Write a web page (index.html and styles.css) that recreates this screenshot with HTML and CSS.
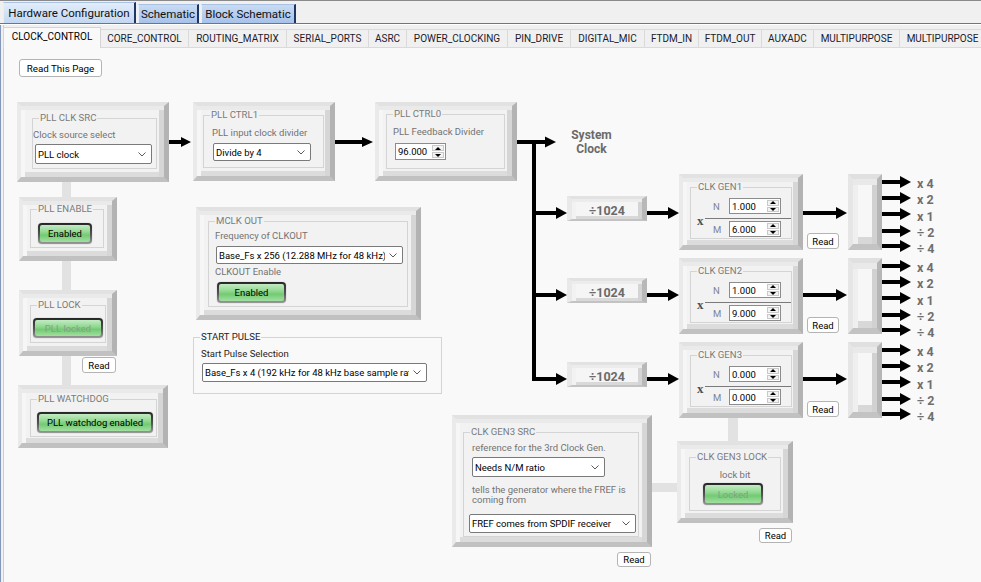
FILE: index.html
```html
<!DOCTYPE html>
<html lang="en">
<head>
<meta charset="utf-8">
<title>Hardware Configuration</title>
<link rel="stylesheet" href="styles.css">
</head>
<body>
<div class="app">
  <div class="main-tabs">
    <div class="mtab mt-hw active">Hardware Configuration</div>
    <div class="mtab mt-sch">Schematic</div>
    <div class="mtab mt-blk">Block Schematic</div>
  </div>
  <div class="main-rule"></div>
  <div class="work">
    <div class="sub-tabs">
      <div class="stab active">CLOCK_CONTROL</div>
      <div class="stab">CORE_CONTROL</div>
      <div class="stab">ROUTING_MATRIX</div>
      <div class="stab">SERIAL_PORTS</div>
      <div class="stab">ASRC</div>
      <div class="stab">POWER_CLOCKING</div>
      <div class="stab">PIN_DRIVE</div>
      <div class="stab">DIGITAL_MIC</div>
      <div class="stab">FTDM_IN</div>
      <div class="stab">FTDM_OUT</div>
      <div class="stab">AUXADC</div>
      <div class="stab">MULTIPURPOSE</div>
      <div class="stab">MULTIPURPOSE</div>
    </div>
    <div class="canvas">
      <svg class="wires" width="981" height="535" viewBox="0 0 981 535">
        <defs>
          <g id="oarr"><rect x="882" y="-2" width="19" height="4"/><polygon points="900,-6 911,0 900,6"/></g>
          <g id="row"><rect x="536" y="-2" width="21" height="4"/><polygon points="556,-6 567,0 556,6"/><rect x="647" y="-2" width="22" height="4"/><polygon points="668,-6 679,0 668,6"/><rect x="803" y="-2" width="34" height="4"/><polygon points="836,-6 847,0 836,6"/></g>
        </defs>
        <g fill="#e2e2e2">
          <rect x="62" y="135" width="9" height="203"/>
          <rect x="728" y="371" width="10" height="23"/>
          <rect x="652" y="436" width="26" height="9"/>
        </g>
        <g fill="#000">
          <rect x="169" y="93" width="13" height="4"/><polygon points="181,90 191,95 181,100"/>
          <rect x="335" y="93" width="28" height="4"/><polygon points="362,90 373,95 362,100"/>
          <rect x="517" y="93" width="29" height="4"/><polygon points="545,89.5 556,95 545,100.5"/>
          <rect x="532" y="93" width="4" height="241"/>
          <rect x="532" y="330" width="6" height="4"/>
          <use href="#row" y="166"/>
          <use href="#row" y="248"/>
          <use href="#row" y="332"/>
          <use href="#oarr" y="135"/><use href="#oarr" y="151"/><use href="#oarr" y="167"/><use href="#oarr" y="184"/><use href="#oarr" y="199"/>
          <use href="#oarr" y="219"/><use href="#oarr" y="235"/><use href="#oarr" y="251"/><use href="#oarr" y="268"/><use href="#oarr" y="283"/>
          <use href="#oarr" y="303"/><use href="#oarr" y="319"/><use href="#oarr" y="335"/><use href="#oarr" y="352"/><use href="#oarr" y="367"/>
        </g>
      </svg>

      <button class="btn read-page">Read This Page</button>

      <div class="bevel n-clksrc">
        <fieldset class="gb">
          <legend>PLL CLK SRC</legend>
          <div class="lbl">Clock source select</div>
          <div class="sel"><span class="sel-t">PLL clock</span><svg class="chev" viewBox="0 0 8 5"><path d="M0.5 0.5 L4 4 L7.5 0.5"/></svg></div>
        </fieldset>
      </div>

      <div class="bevel n-enable">
        <fieldset class="gb">
          <legend>PLL ENABLE</legend>
          <div class="led"><span>Enabled</span></div>
        </fieldset>
      </div>

      <div class="bevel n-lock">
        <fieldset class="gb">
          <legend>PLL LOCK</legend>
          <div class="led off"><span>PLL locked</span></div>
        </fieldset>
      </div>
      <button class="btn read-lock">Read</button>

      <div class="bevel n-wdog">
        <fieldset class="gb">
          <legend>PLL WATCHDOG</legend>
          <div class="led"><span>PLL watchdog enabled</span></div>
        </fieldset>
      </div>

      <div class="bevel n-ctrl1">
        <fieldset class="gb">
          <legend>PLL CTRL1</legend>
          <div class="lbl">PLL input clock divider</div>
          <div class="sel"><span class="sel-t">Divide by 4</span><svg class="chev" viewBox="0 0 8 5"><path d="M0.5 0.5 L4 4 L7.5 0.5"/></svg></div>
        </fieldset>
      </div>

      <div class="bevel n-ctrl0">
        <fieldset class="gb">
          <legend>PLL CTRL0</legend>
          <div class="lbl">PLL Feedback Divider</div>
          <div class="spin"><span class="spin-v">96.000</span><span class="spin-b"><i class="up"></i><i class="dn"></i></span></div>
        </fieldset>
      </div>

      <div class="sysclk"><div>System</div><div>Clock</div></div>

      <div class="div1024 d1">÷1024</div>
      <div class="div1024 d2">÷1024</div>
      <div class="div1024 d3">÷1024</div>

      <div class="bevel gen g1">
        <fieldset class="gb">
          <legend>CLK GEN1</legend>
          <div class="gen-body">
            <div class="mul">x</div>
            <div class="nm">
              <div class="nm-row"><span class="nm-l">N</span><div class="spin"><span class="spin-v">1.000</span><span class="spin-b"><i class="up"></i><i class="dn"></i></span></div></div>
              <div class="nm-sep"></div>
              <div class="nm-row"><span class="nm-l">M</span><div class="spin"><span class="spin-v">6.000</span><span class="spin-b"><i class="up"></i><i class="dn"></i></span></div></div>
            </div>
          </div>
        </fieldset>
      </div>
      <button class="btn read-gen r1">Read</button>

      <div class="bevel gen g2">
        <fieldset class="gb">
          <legend>CLK GEN2</legend>
          <div class="gen-body">
            <div class="mul">x</div>
            <div class="nm">
              <div class="nm-row"><span class="nm-l">N</span><div class="spin"><span class="spin-v">1.000</span><span class="spin-b"><i class="up"></i><i class="dn"></i></span></div></div>
              <div class="nm-sep"></div>
              <div class="nm-row"><span class="nm-l">M</span><div class="spin"><span class="spin-v">9.000</span><span class="spin-b"><i class="up"></i><i class="dn"></i></span></div></div>
            </div>
          </div>
        </fieldset>
      </div>
      <button class="btn read-gen r2">Read</button>

      <div class="bevel gen g3">
        <fieldset class="gb">
          <legend>CLK GEN3</legend>
          <div class="gen-body">
            <div class="mul">x</div>
            <div class="nm">
              <div class="nm-row"><span class="nm-l">N</span><div class="spin"><span class="spin-v">0.000</span><span class="spin-b"><i class="up"></i><i class="dn"></i></span></div></div>
              <div class="nm-sep"></div>
              <div class="nm-row"><span class="nm-l">M</span><div class="spin"><span class="spin-v">0.000</span><span class="spin-b"><i class="up"></i><i class="dn"></i></span></div></div>
            </div>
          </div>
        </fieldset>
      </div>
      <button class="btn read-gen r3">Read</button>

      <div class="out o1"></div>
      <div class="out o2"></div>
      <div class="out o3"></div>

      <div class="olab l1"><div>x 4</div><div>x 2</div><div>x 1</div><div>÷ 2</div><div>÷ 4</div></div>
      <div class="olab l2"><div>x 4</div><div>x 2</div><div>x 1</div><div>÷ 2</div><div>÷ 4</div></div>
      <div class="olab l3"><div>x 4</div><div>x 2</div><div>x 1</div><div>÷ 2</div><div>÷ 4</div></div>

      <div class="bevel n-mclk">
        <fieldset class="gb">
          <legend>MCLK OUT</legend>
          <div class="lbl">Frequency of CLKOUT</div>
          <div class="sel"><span class="sel-t">Base_Fs x 256 (12.288 MHz for 48 kHz)</span><svg class="chev" viewBox="0 0 8 5"><path d="M0.5 0.5 L4 4 L7.5 0.5"/></svg></div>
          <div class="lbl lbl2">CLKOUT Enable</div>
          <div class="led"><span>Enabled</span></div>
        </fieldset>
      </div>

      <fieldset class="gb n-start">
        <legend>START PULSE</legend>
        <div class="lbl">Start Pulse Selection</div>
        <div class="sel"><span class="sel-t">Base_Fs x 4 (192 kHz for 48 kHz base sample rate)</span><svg class="chev" viewBox="0 0 8 5"><path d="M0.5 0.5 L4 4 L7.5 0.5"/></svg></div>
      </fieldset>

      <div class="bevel n-g3src">
        <fieldset class="gb">
          <legend>CLK GEN3 SRC</legend>
          <div class="lbl">reference for the 3rd Clock Gen.</div>
          <div class="sel s1"><span class="sel-t">Needs N/M ratio</span><svg class="chev" viewBox="0 0 8 5"><path d="M0.5 0.5 L4 4 L7.5 0.5"/></svg></div>
          <div class="lbl wrap">tells the generator where the FREF is coming from</div>
          <div class="sel s2"><span class="sel-t">FREF comes from SPDIF receiver</span><svg class="chev" viewBox="0 0 8 5"><path d="M0.5 0.5 L4 4 L7.5 0.5"/></svg></div>
        </fieldset>
      </div>
      <button class="btn read-src">Read</button>

      <div class="bevel n-g3lock">
        <fieldset class="gb">
          <legend>CLK GEN3 LOCK</legend>
          <div class="lbl center">lock bit</div>
          <div class="led off"><span>Locked</span></div>
        </fieldset>
      </div>
      <button class="btn read-g3lock">Read</button>
    </div>
  </div>
</div>
</body>
</html>
```

FILE: styles.css
```css
* { box-sizing: border-box; }

body {
  margin: 0;
  background: #f0f0f0;
  font-family: Roboto, "Liberation Sans", Arial, sans-serif;
  font-size: 9.5px;
  color: #000;
}

.app {
  width: 981px;
  height: 582px;
  overflow: hidden;
  background: #f0f0f0;
  border-top: 1px solid #8a8a8a;
}

/* ---------- top tabs ---------- */
.main-tabs {
  display: flex;
  align-items: flex-end;
  gap: 2px;
  height: 22px;
  padding-left: 3px;
}
.mtab {
  height: 19px;
  line-height: 18px;
  text-align: center;
  font-size: 11.5px;
  color: #101010;
  background: linear-gradient(#c9dbf3, #a7c2e9);
  border-top: 1px solid #a9c1e3;
  border-left: 1px solid #e6eefa;
  border-right: 2px solid #1f3563;
  white-space: nowrap;
}
.mtab.active {
  height: 21px;
  line-height: 20px;
  background: linear-gradient(#e2edfa, #c3d7f1);
}
.mt-hw { width: 133px; }
.mt-sch { width: 61px; }
.mt-blk { width: 95px; }

.main-rule {
  height: 2px;
  border-top: 1px solid #5479bb;
  background: #fff;
}

.work {
  box-shadow: inset 1px 0 #8397bd, inset 3px 0 #f0f0f0, inset 4px 0 #cdcdcd;
}

/* ---------- sub tabs ---------- */
.sub-tabs {
  display: flex;
  align-items: flex-end;
  height: 22px;
  padding-left: 3px;
}
.stab {
  flex: none;
  height: 18px;
  line-height: 17px;
  font-size: 10px;
  color: #1b1b2b;
  text-align: center;
  white-space: nowrap;
  overflow: hidden;
  background: #f0f0f0;
  border-top: 1px solid #dadada;
  border-right: 1px solid #dadada;
}
.stab.active {
  height: 21px;
  line-height: 18px;
  background: #f9f9f9;
  border-left: 1px solid #d4d4d4;
  border-top-color: #d4d4d4;
  border-right-color: #d4d4d4;
  position: relative;
  z-index: 1;
  margin-bottom: -1px;
  color: #000;
}
.stab:nth-child(1) { width: 98px; }
.stab:nth-child(2) { width: 88px; }
.stab:nth-child(3) { width: 98px; }
.stab:nth-child(4) { width: 82px; }
.stab:nth-child(5) { width: 38px; }
.stab:nth-child(6) { width: 101px; }
.stab:nth-child(7) { width: 63px; }
.stab:nth-child(8) { width: 74px; }
.stab:nth-child(9) { width: 54px; }
.stab:nth-child(10) { width: 63px; }
.stab:nth-child(11) { width: 52px; }
.stab:nth-child(12) { width: 86px; }
.stab:nth-child(13) { width: 86px; }

/* ---------- canvas ---------- */
.canvas {
  position: relative;
  height: 535px;
  background: #f9f9f9;
  box-shadow: inset 1px 0 #8397bd, inset 3px 0 #f0f0f0, inset 4px 0 #cdcdcd, inset 0 1px #dadada;
}
.wires { position: absolute; left: 0; top: 0; }

/* buttons */
.btn {
  position: absolute;
  margin: 0;
  padding: 0;
  border: 1px solid #b4b4b4;
  border-radius: 3px;
  background: #fff;
  font-family: inherit;
  font-size: 9.5px;
  color: #000;
  text-align: center;
}
.read-page { left: 19px; top: 12px; width: 83px; height: 18px; font-size: 9.8px; }
.read-lock { left: 82px; top: 310px; width: 34px; height: 16px; }
.read-gen { left: 807px; width: 32px; height: 16px; }
.r1 { top: 186px; }
.r2 { top: 270px; }
.r3 { top: 354px; }
.read-src { left: 617px; top: 505px; width: 34px; height: 15px; }
.read-g3lock { left: 759px; top: 481px; width: 33px; height: 15px; }

/* bevelled panels */
.bevel {
  position: absolute;
  border-style: solid;
  border-width: 4px 5px 5px 4px;
  border-color: #e2e2e2 #b3b3b3 #c1c1c1 #eaeaea;
  padding: 4px 5px 5px 4px;
  background: #f2f2f2;
  box-shadow: inset 0 4px #eaeaea, inset 4px 0 #f6f6f6, inset -5px 0 #d6d6d6, inset 0 -5px #dcdcdc;
}

/* group boxes */
.gb {
  display: block;
  margin: 0;
  padding: 0;
  border: 1px solid #d4d4d4;
  min-width: 0;
}
.gb > legend {
  padding: 0 1px;
  margin-left: 6px;
  font-size: 9.6px;
  line-height: 12px;
  color: #7a7a7a;
}
.lbl {
  font-size: 9.5px;
  line-height: 12px;
  color: #737373;
  white-space: nowrap;
}
.lbl.center { text-align: center; }

.sel {
  display: flex;
  align-items: center;
  background: #fff;
  border: 1px solid #7a7a7a;
  border-radius: 2px;
  padding: 0 5px 0 2px;
}
.sel-t {
  flex: 1;
  overflow: hidden;
  white-space: nowrap;
  font-size: 9.5px;
  color: #000;
}
.chev {
  flex: none;
  width: 8px;
  height: 5px;
  margin-left: 4px;
  fill: none;
  stroke: #5a5a5a;
  stroke-width: 1;
}

.spin {
  display: flex;
  background: #fff;
  border: 1px solid #8c8c8c;
}
.spin-v {
  flex: 1;
  display: flex;
  align-items: center;
  padding-left: 2px;
  font-size: 9.5px;
}
.spin-b {
  width: 14px;
  display: flex;
  flex-direction: column;
  padding: 1px;
  gap: 1px;
}
.spin-b i {
  flex: 1;
  display: flex;
  align-items: center;
  justify-content: center;
  border: 1px solid #c9c9c9;
  background: #f3f3f3;
}
.spin-b i::after {
  content: "";
  border-left: 3px solid transparent;
  border-right: 3px solid transparent;
}
.spin-b .up::after { border-bottom: 3px solid #000; }
.spin-b .dn::after { border-top: 3px solid #000; }

.led {
  border-radius: 4px;
  padding: 2px;
  background: linear-gradient(#262626, #555 55%, #9a9a9a);
  box-shadow: 0 0 1px #888;
}
.led span {
  display: flex;
  height: 100%;
  align-items: center;
  justify-content: center;
  border-radius: 2px;
  background: linear-gradient(#c3ebc3, #93d993 40%, #72cb72 60%, #a2dfa2);
  font-size: 9.5px;
  color: #000;
  white-space: nowrap;
}
.led.off span { color: #86a086; }

/* ---------- individual nodes ---------- */
.n-clksrc { left: 17px; top: 55px; width: 152px; height: 80px; }
.n-clksrc .gb { margin: 2px 0 0 7px; width: 125px; height: 57px; }
.n-clksrc .lbl { margin: 5px 0 0 0; }
.n-clksrc .sel { margin: 3px 0 0 2px; width: 117px; height: 20px; }

.n-enable { left: 19px; top: 150px; width: 98px; height: 64px; }
.n-enable .gb { margin: -2px 0 0 3px; width: 74px; height: 45px; }
.n-enable .led { margin: 8px 0 0 7px; width: 54px; height: 21px; }

.n-lock { left: 19px; top: 243px; width: 98px; height: 66px; }
.n-lock .gb { margin: 1px 0 0 3px; width: 76px; height: 44px; }
.n-lock .led { margin: 7px 0 0 2px; width: 70px; height: 20px; }

.n-wdog { left: 18px; top: 338px; width: 150px; height: 63px; }
.n-wdog .gb { margin: 0 0 0 4px; width: 127px; height: 44px; }
.n-wdog .led { margin: 7px 0 0 6px; width: 116px; height: 21px; }

.n-ctrl1 { left: 193px; top: 55px; width: 142px; height: 79px; }
.n-ctrl1 .gb { margin: -1px 0 0 2px; width: 121px; height: 59px; }
.n-ctrl1 .lbl { margin: 6px 0 0 8px; }
.n-ctrl1 .sel { margin: 4px 0 0 9px; width: 98px; height: 18px; }

.n-ctrl0 { left: 375px; top: 55px; width: 142px; height: 79px; }
.n-ctrl0 .gb { margin: -2px 0 0 3px; width: 119px; height: 61px; }
.n-ctrl0 .lbl { margin: 6px 0 0 6px; }
.n-ctrl0 .spin { margin: 5px 0 0 8px; width: 51px; height: 17px; }

.sysclk {
  position: absolute;
  left: 561px;
  top: 81px;
  width: 61px;
  text-align: center;
  font-weight: bold;
  font-size: 12px;
  line-height: 14px;
  color: #6a6a6a;
}

.div1024 {
  position: absolute;
  left: 567px;
  width: 80px;
  height: 25px;
  border-style: solid;
  border-width: 3px 5px 2px 5px;
  border-color: #e2e2e2 #b8b8b8 #c3c3c3 #e9e9e9;
  padding-top: 5px;
  background: #f5f5f5;
  box-shadow: inset 0 3px #ececec, inset 4px 0 #f2f2f2, inset -4px 0 #d4d4d4, inset 0 -3px #d9d9d9;
  text-align: center;
  font-weight: bold;
  font-size: 12.5px;
  line-height: 14px;
  color: #6a6a6a;
}
.d1 { top: 149px; }
.d2 { top: 231px; }
.d3 { top: 315px; }

.gen { left: 679px; width: 124px; height: 76px; }
.g1 { top: 127px; }
.g2 { top: 211px; }
.g3 { top: 295px; }
.gen .gb { margin: -1px 0 0 3px; width: 102px; height: 58px; }
.gen-body { display: flex; }
.mul {
  width: 14px;
  padding-left: 6px;
  margin-top: 22px;
  font-family: "Liberation Serif", serif;
  font-weight: bold;
  font-size: 13px;
  line-height: 12px;
  color: #505050;
}
.nm { width: 86px; padding-top: 5px; }
.nm-row { display: flex; align-items: center; height: 16px; }
.nm-l { width: 24px; padding-left: 8px; color: #7b8594; font-size: 9.5px; }
.nm .spin { width: 52px; height: 16px; }
.nm-sep { height: 1px; background: #7a7a7a; margin: 4px 0 2px; }

.out {
  position: absolute;
  left: 848px;
  width: 34px;
  height: 76px;
  border-style: solid;
  border-width: 5px 5px 6px 5px;
  border-color: #e0e0e0 #b6b6b6 #c3c3c3 #e6e6e6;
  background: #f7f7f7;
  box-shadow: inset 0 6px #e9e9e9, inset 5px 0 #efefef, inset -5px 0 #d1d1d1, inset 0 -7px #d8d8d8;
}
.o1 { top: 127px; }
.o2 { top: 211px; }
.o3 { top: 295px; }

.olab {
  position: absolute;
  left: 917px;
  font-weight: bold;
  font-size: 12.5px;
  line-height: 16.3px;
  color: #6e6e6e;
  white-space: nowrap;
}
.l1 { top: 129px; }
.l2 { top: 213px; }
.l3 { top: 297px; }

.n-mclk { left: 196px; top: 160px; width: 225px; height: 113px; }
.n-mclk .gb { margin: 0 0 0 4px; width: 200px; height: 92px; }
.n-mclk .lbl { margin: 3px 0 0 6px; }
.n-mclk .sel { margin: 4px 0 0 7px; width: 187px; height: 18px; }
.n-mclk .lbl2 { margin: 2px 0 0 6px; }
.n-mclk .led { margin: 4px 0 0 8px; width: 69px; height: 21px; }

.n-start {
  position: absolute;
  left: 193px;
  top: 284px;
  width: 249px;
  height: 63px;
}
.n-start > legend { color: #1e1e1e; }
.n-start .lbl { margin: 5px 0 0 7px; color: #1e1e1e; }
.n-start .sel { margin: 3px 0 0 8px; width: 225px; height: 19px; }

.n-g3src { left: 452px; top: 368px; width: 200px; height: 132px; }
.n-g3src .gb { margin: 3px 0 0 3px; width: 176px; height: 111px; }
.n-g3src .lbl { margin: 4px 0 0 8px; }
.n-g3src .s1 { margin: 3px 0 0 8px; width: 133px; height: 20px; }
.n-g3src .wrap { white-space: normal; width: 160px; line-height: 10px; margin: 8px 0 0 8px; }
.n-g3src .s2 { margin: 9px 0 0 5px; width: 167px; height: 19px; }

.n-g3lock { left: 677px; top: 394px; width: 116px; height: 82px; }
.n-g3lock .gb { margin: 2px 0 0 4px; width: 92px; height: 60px; }
.n-g3lock .lbl { margin: 6px 0 0 0; }
.n-g3lock .led { margin: 2px 0 0 13px; width: 60px; height: 22px; }
```
